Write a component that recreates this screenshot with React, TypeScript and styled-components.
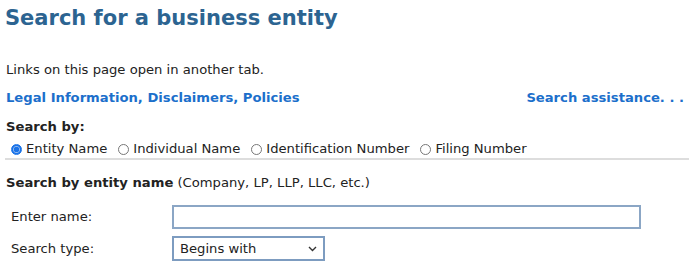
import React from 'react';
import styled, { createGlobalStyle } from 'styled-components';

const GlobalStyle = createGlobalStyle`
  body {
    margin: 0;
    background: #fff;
    font-family: "DejaVu Sans", Verdana, sans-serif;
    font-size: 13.15px;
    color: #222;
  }
`;

const Page = styled.div`
  padding: 4px 16px 0 6px;
  width: 700px;
  box-sizing: border-box;
`;

const Title = styled.h1`
  margin: 0 0 0 -1px;
  font-size: 21px;
  font-weight: 700;
  color: #2c6491;
  line-height: 28px;
`;

const Note = styled.p`
  margin: 30px 0 0;
  line-height: 16px;
`;

const LinkRow = styled.div`
  display: flex;
  justify-content: space-between;
  margin-top: 12px;
  line-height: 16px;
`;

const Link = styled.a`
  color: #1c6fcb;
  font-weight: 700;
  text-decoration: none;
`;

const SectionLabel = styled.div`
  margin-top: 13px;
  font-weight: 700;
  line-height: 16px;
`;

const RadioRow = styled.div`
  display: flex;
  align-items: center;
  gap: 11px;
  margin-top: 6px;
  padding-left: 5px;
  line-height: 16px;
`;

const RadioLabel = styled.label`
  display: flex;
  align-items: center;
  gap: 4px;
`;

const RadioDot = styled.span<{ $checked?: boolean }>`
  width: 11px;
  height: 11px;
  border-radius: 50%;
  box-sizing: border-box;
  border: 1px solid ${(p) => (p.$checked ? '#1a73e8' : '#777')};
  background: ${(p) =>
    p.$checked ? 'radial-gradient(circle, #1a73e8 0 2.5px, #8fb8f0 3px, #1a73e8 4px)' : '#fff'};
`;

const Rule = styled.hr`
  margin: 1px -5px 0 -1px;
  border: 0;
  height: 2px;
  background: #ddd;
`;

const SubHead = styled.div`
  margin-top: 15px;
  line-height: 16px;
  b {
    font-weight: 700;
  }
`;

const FormGrid = styled.div`
  display: grid;
  grid-template-columns: 161px auto;
  row-gap: 7px;
  align-items: center;
  margin-top: 14px;
  padding-left: 5px;
`;

const FieldLabel = styled.label`
  line-height: 16px;
`;

const TextBox = styled.input`
  width: 469px;
  height: 24px;
  box-sizing: border-box;
  border: 2px solid #8ba6c5;
  font: inherit;
  outline: none;
`;

const SelectWrap = styled.div`
  position: relative;
  width: 153px;
`;

const Select = styled.select`
  width: 153px;
  height: 25px;
  box-sizing: border-box;
  border: 2px solid #7d9cc0;
  background: #fff;
  font: inherit;
  color: #222;
  padding: 0 0 0 6px;
  appearance: none;
`;

const Chevron = styled.svg`
  position: absolute;
  right: 8px;
  top: 10px;
  pointer-events: none;
`;

function App() {
  return (
    <>
      <GlobalStyle />
      <Page>
        <Title>Search for a business entity</Title>
        <Note>Links on this page open in another tab.</Note>
        <LinkRow>
          <Link href="#">Legal Information, Disclaimers, Policies</Link>
          <Link href="#">Search assistance. . .</Link>
        </LinkRow>
        <SectionLabel>Search by:</SectionLabel>
        <RadioRow>
          <RadioLabel>
            <RadioDot $checked />
            Entity Name
          </RadioLabel>
          <RadioLabel>
            <RadioDot />
            Individual Name
          </RadioLabel>
          <RadioLabel>
            <RadioDot />
            Identification Number
          </RadioLabel>
          <RadioLabel>
            <RadioDot />
            Filing Number
          </RadioLabel>
        </RadioRow>
        <Rule />
        <SubHead>
          <b>Search by entity name</b> (Company, LP, LLP, LLC, etc.)
        </SubHead>
        <FormGrid>
          <FieldLabel>Enter name:</FieldLabel>
          <TextBox type="text" />
          <FieldLabel>Search type:</FieldLabel>
          <SelectWrap>
            <Select defaultValue="begins">
              <option value="begins">Begins with</option>
              <option value="contains">Contains</option>
            </Select>
            <Chevron width="9" height="6" viewBox="0 0 9 6">
              <path d="M1 1l3.5 3.5L8 1" fill="none" stroke="#333" strokeWidth="1.4" />
            </Chevron>
          </SelectWrap>
        </FormGrid>
      </Page>
    </>
  );
}

export default App;
